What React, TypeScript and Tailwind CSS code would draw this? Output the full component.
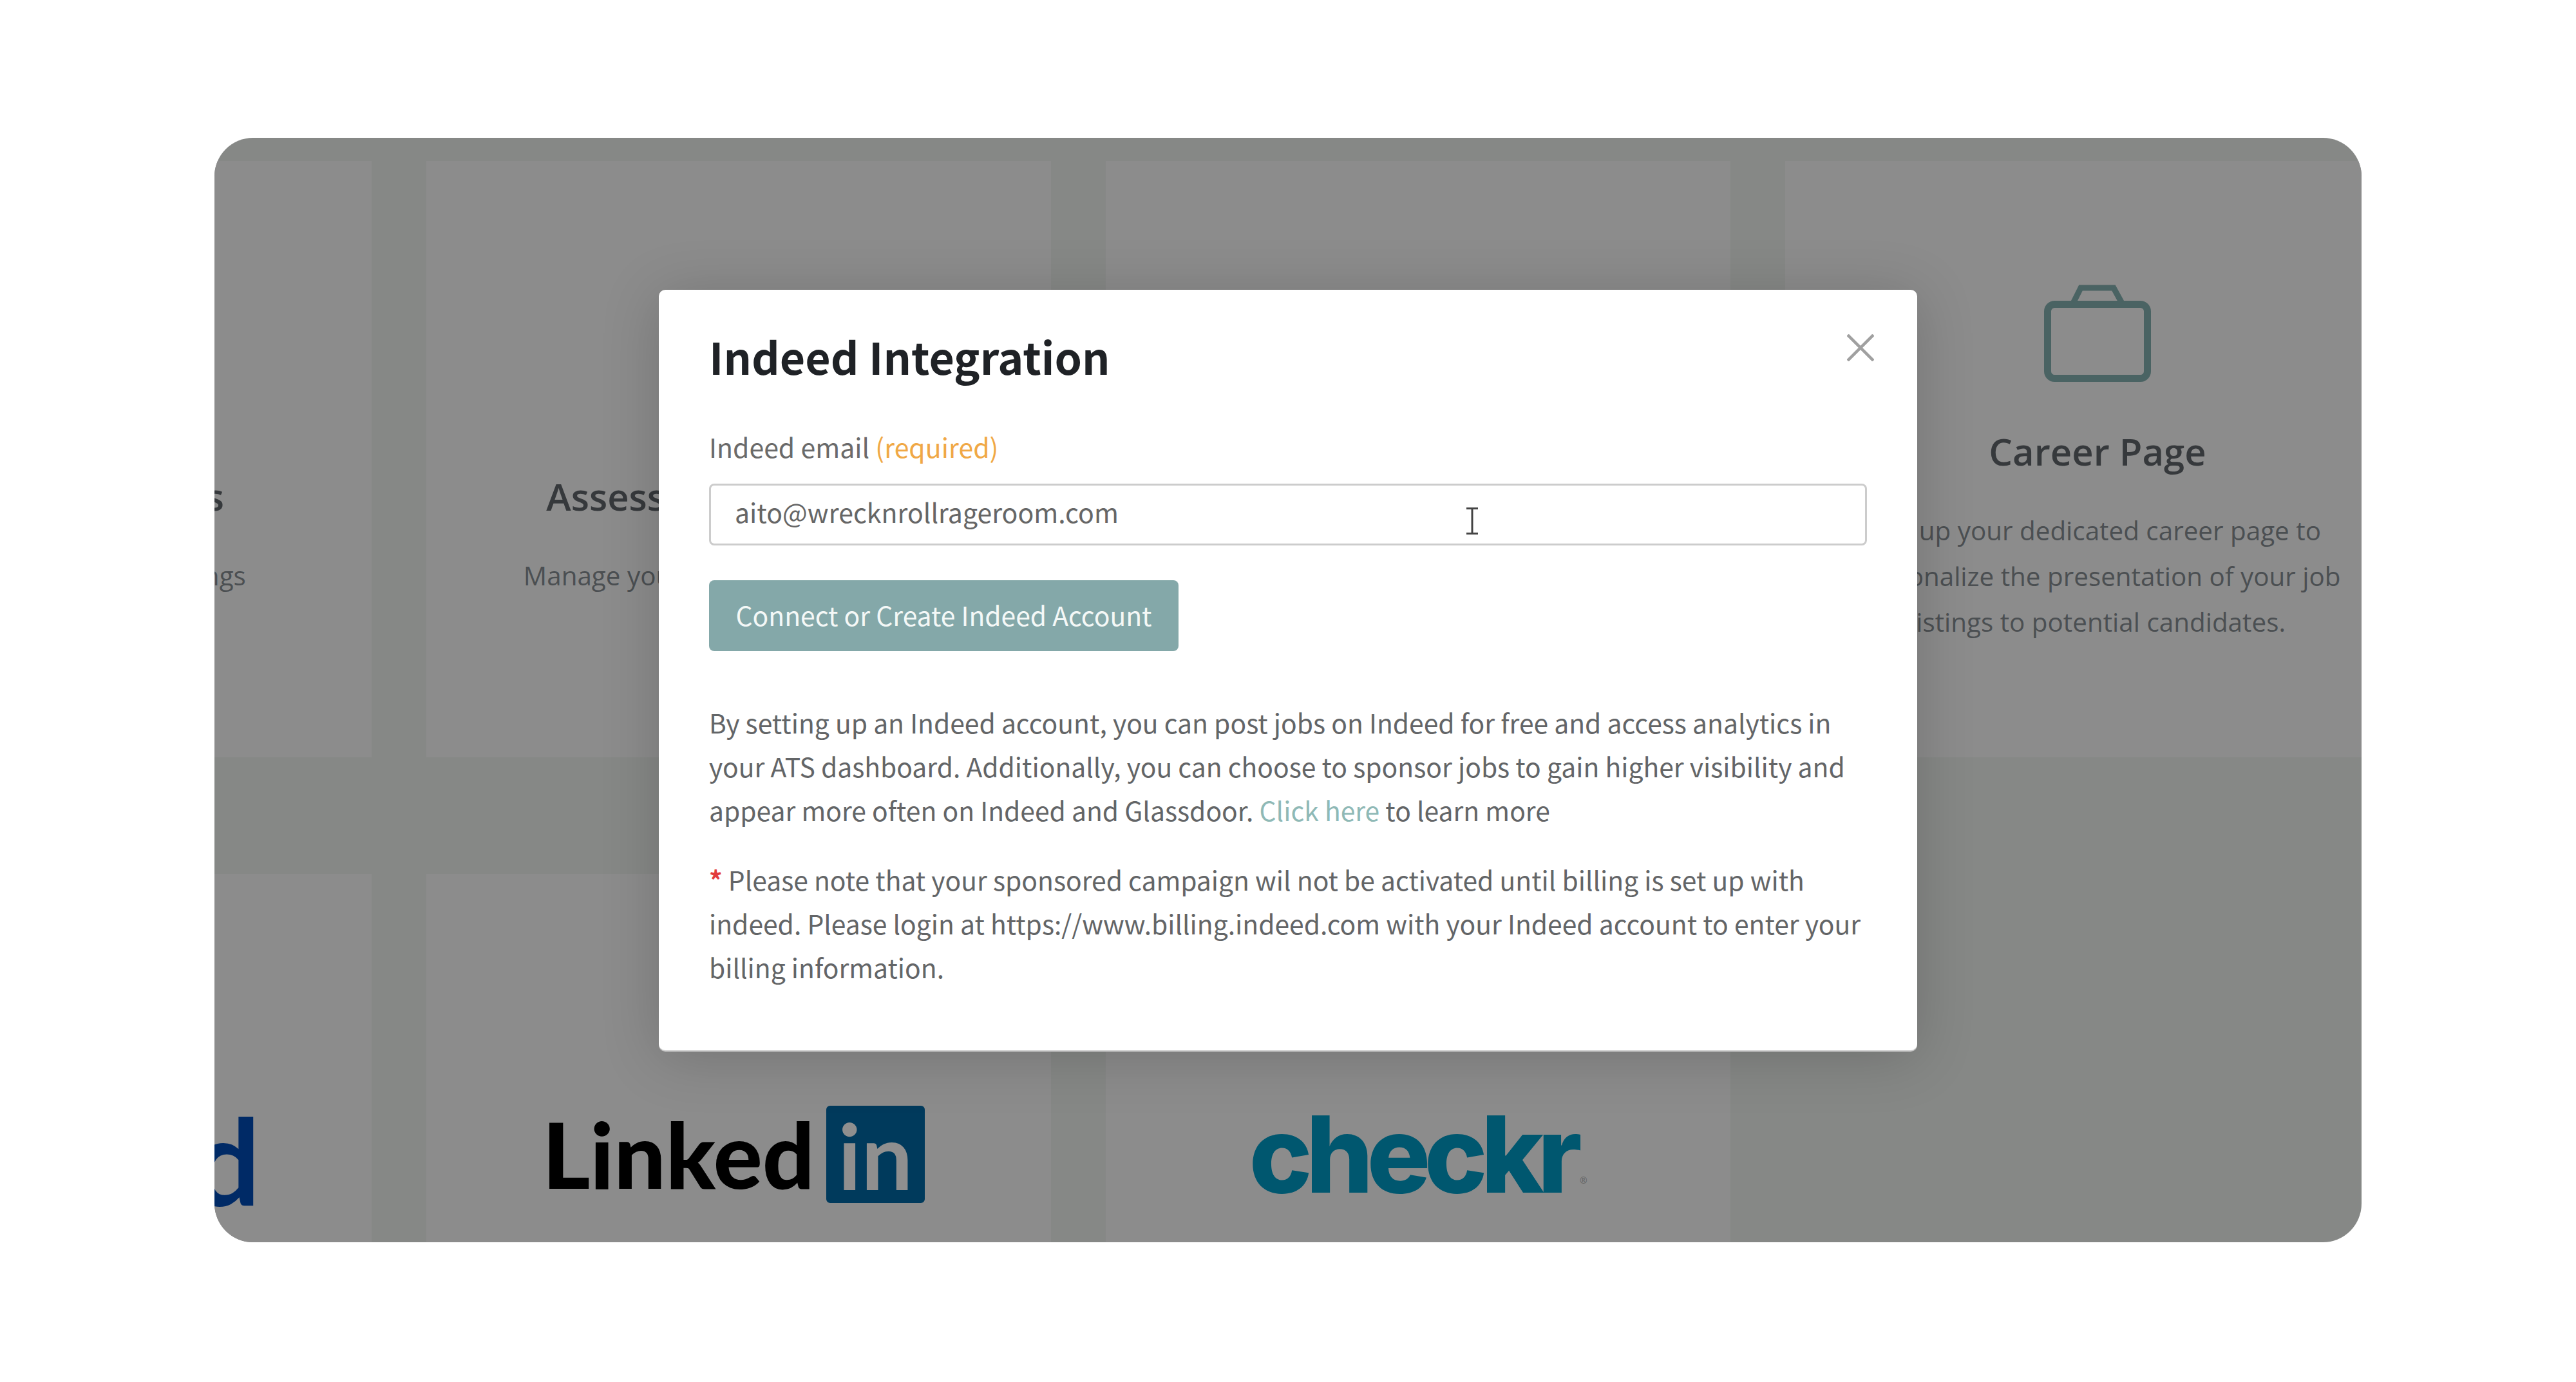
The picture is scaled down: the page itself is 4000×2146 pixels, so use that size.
import React from 'react';

const CloseIcon = () => (
  <svg viewBox="0 0 42 42" className="h-[42px] w-[42px]" fill="none" stroke="#a0a0a0" strokeWidth="4.5">
    <path d="M1 1L41 41M41 1L1 41" />
  </svg>
);

const BriefcaseIcon = () => (
  <svg viewBox="0 0 166 152" className="h-[152px] w-[166px]" fill="none" stroke="#4a6363">
    <rect x="5.5" y="31.5" width="155" height="115" rx="11" strokeWidth="11" />
    <path d="M46 28L57 6H108L120 28" strokeWidth="9" />
  </svg>
);

const TextCursor = () => (
  <svg viewBox="0 0 20 42" className="h-[42px] w-[20px]" fill="none" stroke="#444444">
    <path d="M1 1.5H19M1 40.5H19" strokeWidth="3" />
    <path d="M10 1.5V40.5" strokeWidth="3" />
  </svg>
);

const Card = ({ className = '', children }: { className?: string; children?: React.ReactNode }) => (
  <div className={`bg-[#8c8c8c] ${className}`}>{children}</div>
);

const CardText = ({ title, lines }: { title: string; lines: string[] }) => (
  <div className="flex flex-col items-center text-center font-['Open_Sans',sans-serif]">
    <h3 className="text-[58px] leading-[80px] font-semibold whitespace-nowrap text-[#36393c]">{title}</h3>
    <p className="mt-[47px] text-[40.4px] leading-[71px] whitespace-nowrap text-[#4b4f52]">
      {lines.map((line) => (
        <span key={line} className="block">
          {line}
        </span>
      ))}
    </p>
  </div>
);

const IndeedModal = () => (
  <div className="relative h-[1181px] w-[1954px] rounded-[10px] bg-white px-[78px] pt-[48px] font-['Noto_Sans_CJK_SC',sans-serif] shadow-[0_2px_0_#c4c4c4,0_10px_90px_rgba(0,0,0,0.18)]">
    <button className="absolute top-[69px] right-[67px]">
      <CloseIcon />
    </button>

    <h2 className="text-[68px] leading-[110px] font-semibold text-[#1f2226]">Indeed Integration</h2>

    {/* Email field */}
    <label className="mt-[51px] block text-[41px] leading-[68px] text-[#6a6a6a]">
      Indeed email <span className="text-[#f0a845]">(required)</span>
    </label>
    <div className="relative mt-[24px]">
      <input
        readOnly
        value="aito@wrecknrollrageroom.com"
        className="h-[96px] w-full rounded-[8px] border-[3px] border-[#cccccc] bg-white pb-[10px] pl-[37px] text-[41px] text-[#666666] outline-none"
      />
      <div className="absolute top-[37px] left-[1175px]">
        <TextCursor />
      </div>
    </div>

    <button className="mt-[54px] flex h-[110px] w-[729px] items-center justify-center rounded-[8px] bg-[#84a8a9] pb-[3px] text-[40.8px] whitespace-nowrap text-[#f4f8f7]">
      Connect or Create Indeed Account
    </button>

    {/* Description */}
    <p className="mt-[77px] text-[40.8px] leading-[68px] text-[#636567]">
      By setting up an Indeed account, you can post jobs on Indeed for free and access analytics in
      <br />
      your ATS dashboard. Additionally, you can choose to sponsor jobs to gain higher visibility and
      <br />
      appear more often on Indeed and Glassdoor. <span className="text-[#8fb9b6]">Click here</span> to learn more
    </p>
    <p className="mt-[40px] text-[40.8px] leading-[68px] text-[#636567]">
      <span className="font-semibold text-[#e23b3b]">*</span> Please note that your sponsored campaign wil not be activated until billing is set up with
      <br />
      indeed. Please login at https://www.billing.indeed.com with your Indeed account to enter your
      <br />
      billing information.
    </p>
  </div>
);

export default function App() {
  return (
    <div className="min-h-[2146px] bg-white px-[333px] pt-[214px]">
      <div className="relative h-[1715px] overflow-hidden rounded-[60px] bg-[#868886]">
        <div className="ml-[-726px] grid grid-cols-[repeat(4,970px)] grid-rows-[926px_600px] gap-x-[85px] gap-y-[181px] pt-[36px]">
          <Card className="flex justify-center pt-[481px]">
            <CardText title="Job Board Settings" lines={['Manage & edit your job listings']} />
          </Card>
          <Card className="flex justify-center pt-[481px]">
            <CardText title="Assessment Products" lines={['Manage your assessment providers']} />
          </Card>
          <Card />
          <Card className="flex flex-col items-center pt-[191px]">
            <BriefcaseIcon />
            <div className="mt-[68px]">
              <CardText
                title="Career Page"
                lines={[
                  'Set up your dedicated career page to',
                  'personalize the presentation of your job',
                  'listings to potential candidates.',
                ]}
              />
            </div>
          </Card>

          {/* Logos row */}
          <Card className="flex justify-center pt-[313px] pl-[66px]">
            <span className="font-['Lato',sans-serif] text-[185px] leading-[260px] font-bold text-[#002a66]">indeed</span>
          </Card>
          <Card className="flex items-start justify-center pt-[360px] pr-[16px]">
            <span className="mt-[-1px] font-['Lato',sans-serif] text-[142px] leading-[150px] font-black text-black">Linked</span>
            <span className="ml-[18px] flex h-[151px] w-[153px] items-center justify-center rounded-[6px] bg-[#003a5c] font-['Lato',sans-serif] text-[142px] leading-[150px] font-bold text-[#8f8f8f]">in</span>
          </Card>
          <Card className="flex items-start justify-center pt-[345px]">
            <span className="font-['Inter',sans-serif] text-[165px] leading-[180px] font-extrabold tracking-[-10px] text-[#00576f]">checkr</span>
            <span className="mt-[120px] ml-[6px] text-[14px] text-[#666666]">®</span>
          </Card>
        </div>

        {/* Dialog over the page */}
        <div className="absolute inset-0 flex items-start justify-center pt-[236px]">
          <IndeedModal />
        </div>
      </div>
    </div>
  );
}
